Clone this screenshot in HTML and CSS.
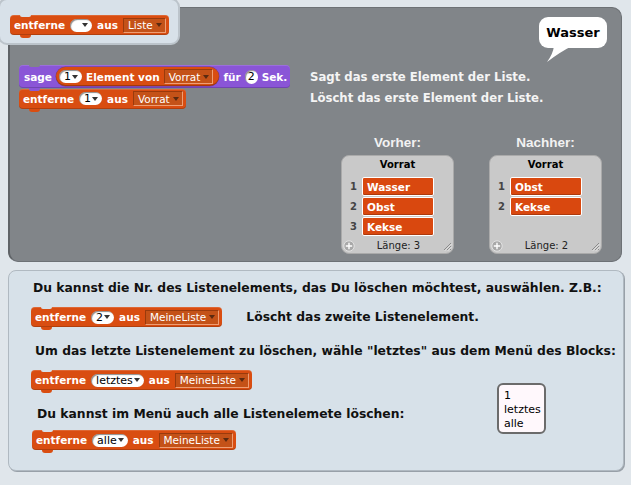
FILE: index.html
```html
<!DOCTYPE html>
<html>
<head>
<meta charset="utf-8">
<link rel="stylesheet" href="styles.css">
</head>
<body>
<div class="page">
  <div class="topcard">
    <div class="blk cmd orange">entferne<span class="slot empty"><i class="tri"></i></span>aus<span class="var">Liste<i class="tri dk"></i></span></div>
  </div>

  <div class="stage">
    <div class="bubble">Wasser<svg class="tail" width="30" height="18" viewBox="0 0 30 18"><path d="M14 0 L28 0 Q16 6 3 16 Q9 8 10 0 Z" fill="#fff"/></svg></div>

    <div class="row r1">
      <div class="blkcol">
        <div class="blk cmd purple">sage<span class="rep"><span class="slot">1<i class="tri"></i></span>Element von<span class="var">Vorrat<i class="tri dk"></i></span></span>für<span class="slot num">2</span>Sek.</div>
      </div>
      <div class="desc">Sagt das erste Element der Liste.</div>
    </div>
    <div class="row r2">
      <div class="blkcol">
        <div class="blk cmd orange">entferne<span class="slot">1<i class="tri"></i></span>aus<span class="var">Vorrat<i class="tri dk"></i></span></div>
      </div>
      <div class="desc">Löscht das erste Element der Liste.</div>
    </div>

    <div class="monitors">
      <div class="mcol">
        <div class="mlabel">Vorher:</div>
        <div class="monitor">
          <div class="mtitle">Vorrat</div>
          <div class="mlist">
            <div class="mitem"><span class="midx">1</span><span class="mbox">Wasser</span></div>
            <div class="mitem"><span class="midx">2</span><span class="mbox">Obst</span></div>
            <div class="mitem"><span class="midx">3</span><span class="mbox">Kekse</span></div>
          </div>
          <div class="mfoot">
            <svg class="plus" width="12" height="12" viewBox="0 0 12 12"><circle cx="6" cy="6" r="5.2" fill="#a9a9a9" stroke="#e2e2e2" stroke-width="1"/><path d="M6 2.8V9.2M2.8 6H9.2" stroke="#fff" stroke-width="1.4"/></svg>
            <span class="mlen">Länge: 3</span>
            <svg class="grip" width="10" height="10" viewBox="0 0 10 10"><path d="M9 2L2 9M9 5L5 9M9 8L8 9" stroke="#8a8a8a" stroke-width="1"/><path d="M9.8 2.8L2.8 9.8M9.8 5.8L5.8 9.8" stroke="#eee" stroke-width="0.8"/></svg>
          </div>
        </div>
      </div>
      <div class="mcol">
        <div class="mlabel">Nachher:</div>
        <div class="monitor">
          <div class="mtitle">Vorrat</div>
          <div class="mlist">
            <div class="mitem"><span class="midx">1</span><span class="mbox">Obst</span></div>
            <div class="mitem"><span class="midx">2</span><span class="mbox">Kekse</span></div>
          </div>
          <div class="mfoot">
            <svg class="plus" width="12" height="12" viewBox="0 0 12 12"><circle cx="6" cy="6" r="5.2" fill="#a9a9a9" stroke="#e2e2e2" stroke-width="1"/><path d="M6 2.8V9.2M2.8 6H9.2" stroke="#fff" stroke-width="1.4"/></svg>
            <span class="mlen">Länge: 2</span>
            <svg class="grip" width="10" height="10" viewBox="0 0 10 10"><path d="M9 2L2 9M9 5L5 9M9 8L8 9" stroke="#8a8a8a" stroke-width="1"/><path d="M9.8 2.8L2.8 9.8M9.8 5.8L5.8 9.8" stroke="#eee" stroke-width="0.8"/></svg>
          </div>
        </div>
      </div>
    </div>
  </div>

  <div class="info">
    <div class="itext t1">Du kannst die Nr. des Listenelements, das Du löschen möchtest, auswählen. Z.B.:</div>
    <div class="irow b1">
      <div class="blk cmd orange">entferne<span class="slot">2<i class="tri"></i></span>aus<span class="var">MeineListe<i class="tri dk"></i></span></div>
      <span class="itext side">Löscht das zweite Listenelement.</span>
    </div>
    <div class="itext t2">Um das letzte Listenelement zu löschen, wähle "letztes" aus dem Menü des Blocks:</div>
    <div class="irow b2">
      <div class="blk cmd orange">entferne<span class="slot">letztes<i class="tri"></i></span>aus<span class="var">MeineListe<i class="tri dk"></i></span></div>
    </div>
    <div class="itext t3">Du kannst im Menü auch alle Listenelemete löschen:</div>
    <div class="irow b3">
      <div class="blk cmd orange">entferne<span class="slot">alle<i class="tri"></i></span>aus<span class="var">MeineListe<i class="tri dk"></i></span></div>
    </div>
    <div class="menu">
      <div>1</div>
      <div>letztes</div>
      <div>alle</div>
    </div>
  </div>
</div>
</body>
</html>
```

FILE: styles.css
```css
* { box-sizing: border-box; }

body {
  margin: 0;
  width: 631px;
  height: 485px;
  overflow: hidden;
  background: #e0e6eb;
  font-family: "DejaVu Sans", sans-serif;
}

.page {
  position: relative;
  padding: 7px 0 0 8px;
  height: 485px;
}

/* ---------- Scratch blocks ---------- */
.blk {
  position: relative;
  display: inline-flex;
  align-items: center;
  gap: 5px;
  height: 20px;
  padding: 0 3px 0 4px;
  border-radius: 4px;
  font: bold 10.5px "DejaVu Sans", sans-serif;
  color: #fff;
  white-space: nowrap;
  box-shadow: inset 0 -1px 0 rgba(0, 0, 0, 0.18), inset 0 1px 0 rgba(255, 255, 255, 0.15);
}
.orange { background: #d94d11; }
.purple { background: #8a55d7; height: 23px; padding-left: 5px; padding-right: 3px; gap: 4px; }

.cmd::before {
  content: "";
  position: absolute;
  left: 10px;
  top: 0;
  width: 11px;
  height: 2px;
  background: var(--bg);
  border-radius: 0 0 2px 2px;
}
.cmd::after {
  content: "";
  position: absolute;
  left: 10px;
  bottom: -3px;
  width: 11px;
  height: 3px;
  background: inherit;
  border-radius: 0 0 3px 3px;
}

.slot {
  display: inline-flex;
  align-items: center;
  gap: 1px;
  height: 13px;
  padding: 0 4px 0 5px;
  background: #fff;
  border-radius: 7px;
  color: #000;
  font: 11px "DejaVu Sans", sans-serif;
  box-shadow: inset 1px 1px 1px rgba(0, 0, 0, 0.45);
}
.slot.empty { width: 22px; justify-content: flex-end; padding-right: 4px; }
.slot.num { padding: 0 3px; height: 14px; }

.var {
  display: inline-flex;
  align-items: center;
  gap: 3px;
  height: 15px;
  padding: 0 3px 0 4px;
  background: #c45218;
  border: 1px solid;
  border-color: #9a3a0c #ee9e74 #ee9e74 #9a3a0c;
  color: #fff;
  font: 10.5px "DejaVu Sans", sans-serif;
}

.tri {
  display: inline-block;
  width: 0;
  height: 0;
  border-left: 3.5px solid transparent;
  border-right: 3.5px solid transparent;
  border-top: 4px solid #333;
}
.tri.dk { border-top-color: #5b2a10; }

.rep {
  display: inline-flex;
  align-items: center;
  gap: 4px;
  height: 19px;
  padding: 0 6px 0 3px;
  background: #d94d11;
  border-radius: 10px;
  box-shadow: inset 0 -1px 0 rgba(0, 0, 0, 0.25), 0 0 0 0.5px rgba(90, 30, 0, 0.4);
}

/* ---------- top card ---------- */
.topcard {
  position: absolute;
  left: -2px;
  top: -2px;
  width: 182px;
  height: 47px;
  padding: 14px 0 0 10px;
  background: #d8e1e9;
  border: 2px solid #bcc4cb;
  border-radius: 9px;
  z-index: 5;
  --bg: #d8e1e9;
}

/* ---------- stage ---------- */
.stage {
  position: relative;
  width: 614px;
  height: 255px;
  padding: 57px 19px 0 9px;
  background: #818589;
  border: 1px solid #6d7175;
  border-left: 2px solid #5f6367;
  border-radius: 10px;
  display: flex;
  flex-direction: column;
  --bg: #818589;
}

.row { display: flex; align-items: center; }
.r1 { height: 23px; position: relative; z-index: 2; }
.r2 { height: 20px; }
.blkcol { width: 291px; flex: none; }

.desc {
  color: #f4f4f4;
  font: bold 11.7px "DejaVu Sans", sans-serif;
}

.bubble {
  position: absolute;
  left: 529px;
  top: 9px;
  width: 68px;
  height: 31px;
  background: #fff;
  border-radius: 9px;
  display: flex;
  align-items: center;
  justify-content: center;
  font: bold 13px "DejaVu Sans", sans-serif;
  color: #000;
}
.tail { position: absolute; left: 5px; top: 29px; }

.monitors {
  display: flex;
  justify-content: flex-end;
  gap: 35px;
  margin-top: 26px;
}
.mcol {
  width: 113px;
  display: flex;
  flex-direction: column;
  align-items: center;
}
.mlabel {
  font: bold 13.5px "Liberation Sans", sans-serif;
  line-height: 17px;
  color: #f2f2f2;
  margin-bottom: 4px;
}
.monitor {
  width: 113px;
  height: 99px;
  background: #c9c9c9;
  border: 1px solid #aaaaaa;
  border-radius: 8px;
  display: flex;
  flex-direction: column;
  padding-top: 3px;
}
.mtitle {
  text-align: center;
  font: bold 10px "DejaVu Sans", sans-serif;
  line-height: 12px;
  color: #000;
  margin-bottom: 6px;
}
.mlist {
  flex: 1;
  display: flex;
  flex-direction: column;
  gap: 1px;
}
.mitem { display: flex; align-items: center; }
.midx {
  width: 15px;
  text-align: right;
  font: bold 10px "DejaVu Sans", sans-serif;
  color: #444;
}
.mbox {
  width: 72px;
  height: 19px;
  margin-left: 5px;
  padding-left: 4px;
  display: flex;
  align-items: center;
  background: #d9480f;
  border: 1px solid #fff;
  border-radius: 2px;
  box-shadow: inset 0 -1px 0 rgba(0, 0, 0, 0.2);
  color: #fff;
  font: bold 10.5px "DejaVu Sans", sans-serif;
}
.mfoot {
  display: flex;
  align-items: center;
  height: 14px;
  padding: 0 1px 1px 1px;
}
.plus { flex: none; }
.mlen {
  flex: 1;
  text-align: center;
  font: 10px "DejaVu Sans", sans-serif;
  color: #222;
}
.grip { flex: none; }

/* ---------- info panel ---------- */
.info {
  position: relative;
  width: 616px;
  height: 201px;
  margin-top: 8px;
  padding: 9px 0 0 22px;
  background: #d7e1e9;
  border: 1px solid #b0b9c1;
  border-radius: 8px;
  box-shadow: 1px 1px 0 #98a0a8;
  --bg: #d7e1e9;
}
.itext {
  font: bold 12.35px "DejaVu Sans", sans-serif;
  line-height: 16px;
  color: #111;
  white-space: nowrap;
}
.t1 { margin-left: 2px; }
.t2 { margin-left: 4px; margin-top: 16px; }
.t3 { margin-left: 6px; margin-top: 16px; }
.irow { display: flex; align-items: center; height: 20px; }
.b1 { margin-top: 11px; }
.b2 { margin-top: 11px; }
.b3 { margin-top: 8px; margin-left: 1px; }
.side { margin-left: 24px; }

.menu {
  position: absolute;
  left: 488px;
  top: 112px;
  width: 49px;
  height: 51px;
  padding: 4px 0 0 5px;
  background: #fff8fc;
  border: 2px solid #6b6b6b;
  border-radius: 6px;
  font: 11px "DejaVu Sans", sans-serif;
  line-height: 14px;
  color: #000;
}
```
